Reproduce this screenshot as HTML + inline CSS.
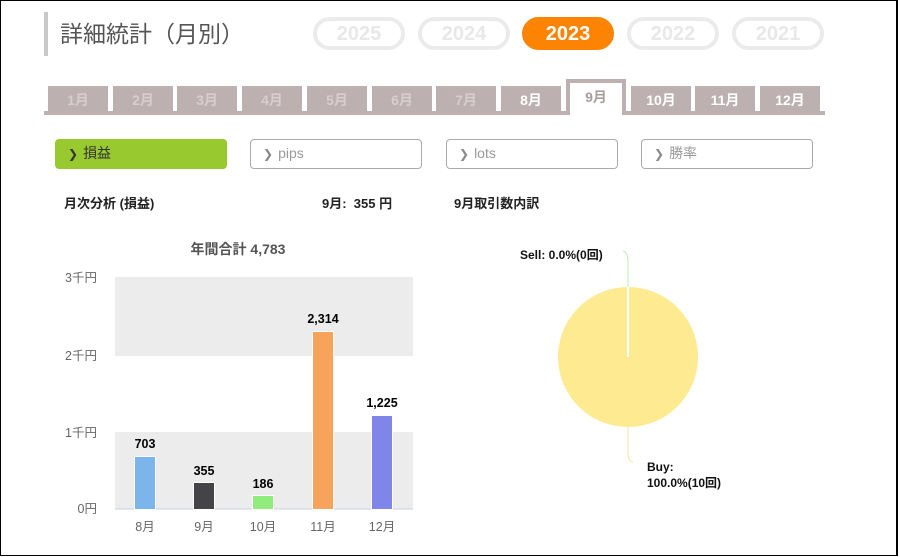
<!DOCTYPE html>
<html><head><meta charset="utf-8"><style>
*{margin:0;padding:0;box-sizing:border-box}
body{width:900px;height:557px;background:#fff;position:relative;overflow:hidden;font-family:"Liberation Sans","Noto Sans CJK JP",sans-serif;}
.frame{position:absolute;left:0;top:0;width:898px;height:556px;border:1px solid #000;border-right:2px solid #000;}
.a{position:absolute}
.title{left:44px;top:12px;height:44px;border-left:4px solid #c8c8c8;padding-left:12px;font-size:23px;color:#555;line-height:44px}
.pill{top:17px;width:92px;height:33px;border:4px solid #ebebeb;border-radius:17px;color:#e8e8e8;font-weight:bold;font-size:20px;text-align:center;line-height:26px}
.pill.on{background:#fd8403;border-color:#fd8403;color:#fff}
.tab{top:86px;width:60px;height:27px;background:#bcb0b0;color:#d8cece;font-weight:bold;font-size:14px;text-align:center;line-height:28px}
.tab.w{color:#fff}
.tab.on{top:79px;height:36px;background:#fff;border:4px solid #bcb0b0;border-bottom:none;color:#aa9c9c;line-height:28px;z-index:2}
.btn{top:139px;width:172px;height:30px;border:1.5px solid #aaa;border-radius:4px;font-size:14px;color:#999;line-height:27px;padding-left:12px}
.btn b{font-family:"DejaVu Sans",sans-serif;font-size:12px;font-weight:900;color:#888;margin-right:5px}
.btn.on{background:#98c92f;border-color:#98c92f;color:#333}
.btn.on b{color:#333}
.h{font-size:13px;font-weight:bold;color:#222}
</style></head><body>
<div class="frame"></div>
<div class="a title">詳細統計（月別）</div>
<div class="a pill" style="left:313px">2025</div>
<div class="a pill" style="left:418px">2024</div>
<div class="a pill on" style="left:522px">2023</div>
<div class="a pill" style="left:627px">2022</div>
<div class="a pill" style="left:732px">2021</div>
<div class="a" style="left:44px;top:111px;width:781px;height:4px;background:#bcb0b0"></div>
<div class="a tab" style="left:48px">1月</div>
<div class="a tab" style="left:113px">2月</div>
<div class="a tab" style="left:177px">3月</div>
<div class="a tab" style="left:242px">4月</div>
<div class="a tab" style="left:307px">5月</div>
<div class="a tab" style="left:372px">6月</div>
<div class="a tab" style="left:436px">7月</div>
<div class="a tab w" style="left:501px">8月</div>
<div class="a tab on" style="left:566px">9月</div>
<div class="a tab w" style="left:631px">10月</div>
<div class="a tab w" style="left:695px">11月</div>
<div class="a tab w" style="left:760px">12月</div>
<div class="a btn on" style="left:55px"><b>❯</b>損益</div>
<div class="a btn" style="left:250px"><b>❯</b>pips</div>
<div class="a btn" style="left:446px"><b>❯</b>lots</div>
<div class="a btn" style="left:641px"><b>❯</b>勝率</div>
<div class="a h" style="left:64px;top:193px">月次分析 (損益)</div>
<div class="a h" style="left:322px;top:193px">9月:&nbsp; 355 円</div>
<div class="a h" style="left:454px;top:193px">9月取引数内訳</div>
<svg class="a" style="left:0;top:0" width="900" height="557" font-family="Liberation Sans,Noto Sans CJK JP,sans-serif">
<text x="238" y="254" text-anchor="middle" font-size="14" font-weight="bold" fill="#555">年間合計 4,783</text>
<rect x="115" y="277" width="298" height="79" fill="#ececec"/>
<rect x="115" y="432" width="298" height="77" fill="#ececec"/>
<line x1="115" y1="509" x2="413" y2="509" stroke="#c8d0e8"/>
<g font-size="12.5" fill="#666" text-anchor="end">
<text x="97" y="282">3千円</text><text x="97" y="360">2千円</text><text x="97" y="437">1千円</text><text x="97" y="513">0円</text>
</g>
<g stroke="#fff" stroke-width="1">
<rect x="134.5" y="456.5" width="21" height="53" fill="#7cb5ec"/>
<rect x="193.5" y="482.5" width="21" height="27" fill="#434348"/>
<rect x="252.5" y="495.5" width="21" height="14" fill="#90ed7d"/>
<rect x="312.5" y="331.5" width="21" height="178" fill="#f7a35c"/>
<rect x="371.5" y="415.5" width="21" height="94" fill="#8085e9"/>
</g>
<g font-size="12.5" font-weight="bold" fill="#000" text-anchor="middle">
<text x="145" y="448">703</text><text x="204" y="475">355</text><text x="263" y="488">186</text><text x="323" y="323">2,314</text><text x="382" y="407">1,225</text>
</g>
<g font-size="12.5" fill="#666" text-anchor="middle">
<text x="145" y="531">8月</text><text x="204" y="531">9月</text><text x="263" y="531">10月</text><text x="323" y="531">11月</text><text x="382" y="531">12月</text>
</g>
<path d="M623 251 Q628 252 628 262 L628 287" stroke="#b8f0b0" fill="none"/>
<path d="M628 427 L628 452 Q628 462 633 462" stroke="#f6e8a0" fill="none"/>
<circle cx="628" cy="357" r="70" fill="#fdea91"/>
<line x1="628" y1="287" x2="628" y2="357" stroke="#fff" stroke-width="2"/>
<g font-size="12" font-weight="bold" fill="#111">
<text x="520" y="259">Sell: 0.0%(0回)</text>
<text x="647" y="471">Buy:</text>
<text x="647" y="487">100.0%(10回)</text>
</g>
</svg>
</body></html>
